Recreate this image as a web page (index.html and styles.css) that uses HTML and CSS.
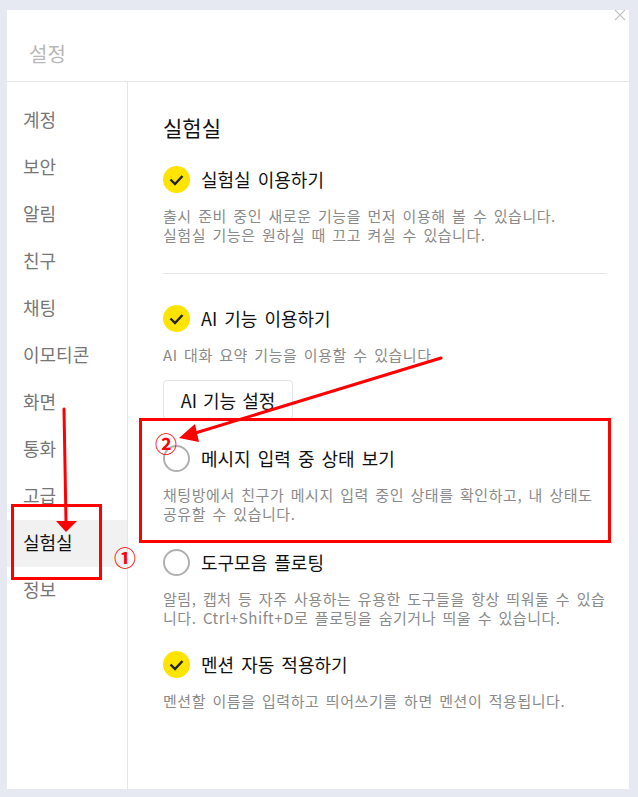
FILE: index.html
```html
<!DOCTYPE html>
<html lang="ko">
<head>
    <meta charset="UTF-8">
    <title>설정</title>
    <link rel="stylesheet" href="styles.css">
</head>
<body>
    <div class="window">
        <svg class="close" width="12" height="12" viewBox="0 0 12 12">
            <path d="M1 1L11 11M11 1L1 11" stroke="#c4c4c4" stroke-width="1.2" fill="none"/>
        </svg>
        <div class="header">설정</div>
        <div class="main">
            <div class="sidebar">
                <div class="nav-item">계정</div>
                <div class="nav-item">보안</div>
                <div class="nav-item">알림</div>
                <div class="nav-item">친구</div>
                <div class="nav-item">채팅</div>
                <div class="nav-item">이모티콘</div>
                <div class="nav-item">화면</div>
                <div class="nav-item">통화</div>
                <div class="nav-item">고급</div>
                <div class="nav-item active">실험실</div>
                <div class="nav-item">정보</div>
            </div>
            <div class="content">
                <h2>실험실</h2>

                <div class="option first">
                    <div class="option-head">
                        <span class="check on"><svg width="27" height="27" viewBox="0 0 27 27"><path d="M7.5 13.5L12 18L19.5 10" stroke="#222" stroke-width="2.4" fill="none"/></svg></span>
                        <span class="label">실험실 이용하기</span>
                    </div>
                    <p class="desc">출시 준비 중인 새로운 기능을 먼저 이용해 볼 수 있습니다.<br>실험실 기능은 원하실 때 끄고 켜실 수 있습니다.</p>
                </div>

                <div class="divider"></div>

                <div class="option">
                    <div class="option-head">
                        <span class="check on"><svg width="27" height="27" viewBox="0 0 27 27"><path d="M7.5 13.5L12 18L19.5 10" stroke="#222" stroke-width="2.4" fill="none"/></svg></span>
                        <span class="label">AI 기능 이용하기</span>
                    </div>
                    <p class="desc">AI 대화 요약 기능을 이용할 수 있습니다.</p>
                    <button class="btn">AI 기능 설정</button>
                </div>

                <div class="option typing">
                    <div class="option-head">
                        <span class="check"></span>
                        <span class="label">메시지 입력 중 상태 보기</span>
                    </div>
                    <p class="desc">채팅방에서 친구가 메시지 입력 중인 상태를 확인하고, 내 상태도<br>공유할 수 있습니다.</p>
                </div>

                <div class="option toolbar">
                    <div class="option-head">
                        <span class="check"></span>
                        <span class="label">도구모음 플로팅</span>
                    </div>
                    <p class="desc">알림, 캡처 등 자주 사용하는 유용한 도구들을 항상 띄워둘 수 있습<br>니다. Ctrl+Shift+D로 플로팅을 숨기거나 띄울 수 있습니다.</p>
                </div>

                <div class="option mention">
                    <div class="option-head">
                        <span class="check on"><svg width="27" height="27" viewBox="0 0 27 27"><path d="M7.5 13.5L12 18L19.5 10" stroke="#222" stroke-width="2.4" fill="none"/></svg></span>
                        <span class="label">멘션 자동 적용하기</span>
                    </div>
                    <p class="desc">멘션할 이름을 입력하고 띄어쓰기를 하면 멘션이 적용됩니다.</p>
                </div>
            </div>
        </div>
    </div>

    <!-- annotations drawn over the screenshot -->
    <div class="mark mark-nav"></div>
    <div class="mark mark-option"></div>
    <svg class="arrows" width="638" height="797" viewBox="0 0 638 797">
        <path d="M64 409L66 522" stroke="#f00" stroke-width="3" fill="none" stroke-linecap="round"/>
        <path d="M56 521L77 521L66 532Z" fill="#f00"/>
        <path d="M441 358L192 434" stroke="#f00" stroke-width="3" fill="none" stroke-linecap="round"/>
        <path d="M179 438L195 424L199 442Z" fill="#f00"/>
    </svg>
    <span class="num num-1">①</span>
    <span class="num num-2">②</span>
</body>
</html>
```

FILE: styles.css
```css
* {
    margin: 0;
    padding: 0;
    box-sizing: border-box;
    font-family: 'Noto Sans CJK KR', 'Noto Sans', sans-serif;
}

html, body {
    height: 797px;
    overflow: hidden;
}

body {
    background-color: #e6e9f1;
    padding: 10px 9px 8px 7px;
}

.window {
    position: relative;
    height: 779px;
    background-color: white;
    display: flex;
    flex-direction: column;
}

.close {
    position: absolute;
    top: -1px;
    right: 3px;
}

.header {
    height: 72px;
    padding: 27px 0 0 22px;
    font-size: 20px;
    line-height: 34px;
    color: #b8b8b8;
    border-bottom: 1px solid #e6e6e6;
}

.main {
    flex: 1;
    display: flex;
}

.sidebar {
    width: 121px;
    padding-top: 15px;
    border-right: 1px solid #e6e6e6;
}

.nav-item {
    height: 47px;
    padding-left: 16px;
    font-size: 18px;
    line-height: 45px;
    color: #767676;
}

.nav-item.active {
    background-color: #f1f1f1;
    color: #111;
}

.content {
    flex: 1;
    padding: 30px 22px 0 35px;
}

h2 {
    font-size: 21px;
    font-weight: normal;
    line-height: 30px;
    color: #111;
}

.option-head {
    display: flex;
    align-items: center;
    gap: 11px;
    height: 28px;
}

.check {
    width: 27px;
    height: 27px;
    border-radius: 50%;
    border: 2px solid #b0b0b0;
    flex-shrink: 0;
}

.check.on {
    background-color: #ffe400;
    border: none;
}

.label {
    font-size: 18px;
    word-spacing: 2px;
    color: #111;
}

.desc {
    margin-top: 13px;
    font-size: 15px;
    letter-spacing: 0.55px;
    word-spacing: 1.7px;
    line-height: 19px;
    color: #8a8a8a;
    white-space: nowrap;
}

.first {
    margin-top: 23px;
}

.divider {
    height: 1px;
    background-color: #e6e6e6;
    margin: 29px 0 30px;
}

.btn {
    display: block;
    width: 130px;
    height: 40px;
    margin-top: 16px;
    background-color: white;
    border: 1px solid #e4e4e4;
    border-radius: 4px;
    font-size: 18px;
    word-spacing: 1px;
    color: #111;
}

.typing {
    margin-top: 24px;
}

.toolbar {
    margin-top: 25px;
}

.mention {
    margin-top: 23px;
}

.mark {
    position: absolute;
    border: 3px solid #f00;
}

.mark-nav {
    left: 11px;
    top: 504px;
    width: 91px;
    height: 76px;
}

.mark-option {
    left: 139px;
    top: 418px;
    width: 472px;
    height: 125px;
}

.arrows {
    position: absolute;
    left: 0;
    top: 0;
}

.num {
    position: absolute;
    font-size: 22px;
    font-weight: bold;
    line-height: 24px;
    color: #f00;
}

.num-1 {
    left: 114px;
    top: 544px;
}

.num-2 {
    left: 155px;
    top: 430px;
}
```
